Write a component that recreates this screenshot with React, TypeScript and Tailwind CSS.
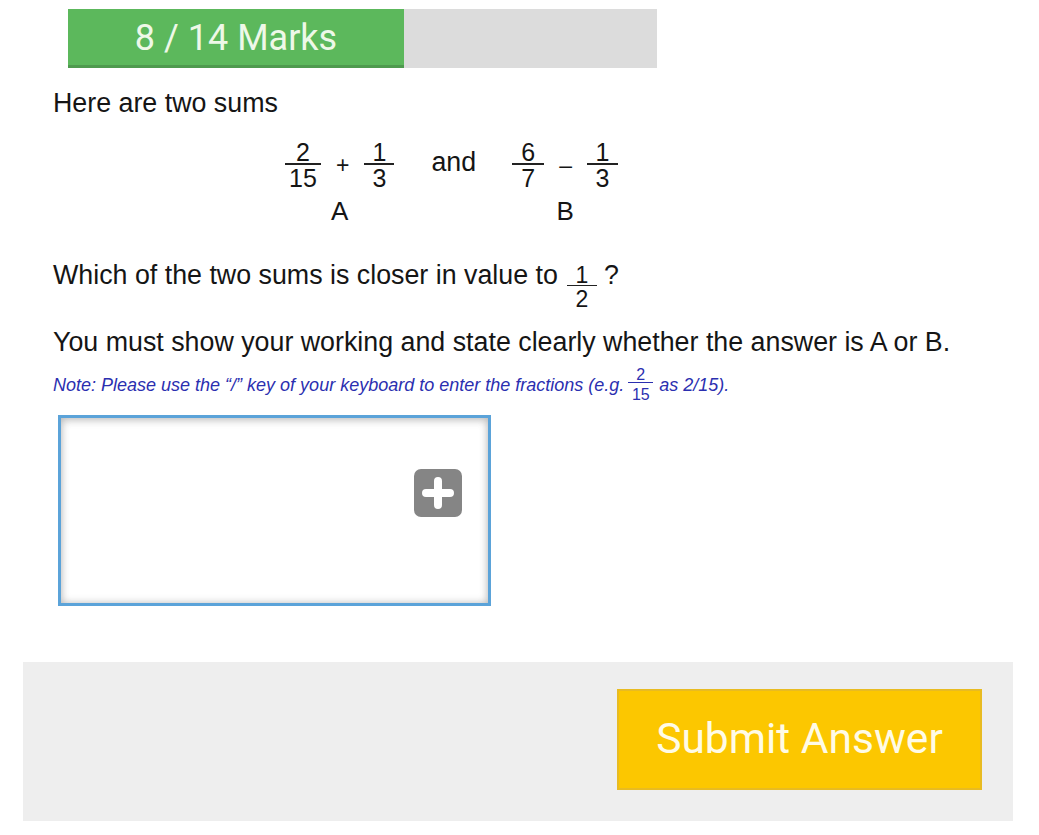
import type { ReactNode } from 'react';

// ── Stacked fraction ─────────────────────────────────────────────────────────

function Frac({
  top,
  bottom,
  className = '',
  lineClass = 'leading-[21px]',
  barClass = 'border-t-2 border-[#222]',
  gapClass = 'mt-[3px]',
}: {
  top: ReactNode;
  bottom: ReactNode;
  className?: string;
  lineClass?: string;
  barClass?: string;
  gapClass?: string;
}): JSX.Element {
  return (
    <span className={`inline-flex shrink-0 flex-col items-center ${className}`}>
      <span className={lineClass}>{top}</span>
      <span className={`w-full ${barClass}`} />
      <span className={`${lineClass} ${gapClass}`}>{bottom}</span>
    </span>
  );
}

// ── Progress bar ─────────────────────────────────────────────────────────────

function MarksBar({ marks, total }: { marks: number; total: number }): JSX.Element {
  return (
    <div className="ml-[68px] mt-[9px] flex h-[59px] w-[589px] bg-[#dcdcdc]">
      <div className="flex w-[336px] items-center justify-center border-b-[3px] border-[#4e9a4e] bg-[#5cb85c] pt-[1px] font-['Roboto'] text-[36px] leading-none text-[#eef8e8]">
        {marks} / {total} Marks
      </div>
    </div>
  );
}

// ── Sum display ──────────────────────────────────────────────────────────────

function Sum({ label, children }: { label: string; children: ReactNode }): JSX.Element {
  return (
    <div className="flex flex-col items-center">
      <div className="flex items-center gap-[15px]">{children}</div>
      <div className="mt-[9px] text-[26px] leading-none">{label}</div>
    </div>
  );
}

export default function App(): JSX.Element {
  return (
    <div className="relative h-[835px] w-[1039px] overflow-hidden bg-white font-['Liberation_Sans',Arial,sans-serif] text-[#151515]">
      <MarksBar marks={8} total={14} />

      <div className="pl-[53px]">
        <p className="mt-[20px] text-[26.8px] leading-[30px]">Here are two sums</p>

        <div className="ml-[232px] mt-[24px] flex items-start text-[25px]">
          <Sum label="A">
            <Frac top="2" bottom="15" className="w-[36px]" />
            <span className="text-[23px] leading-none">+</span>
            <Frac top="1" bottom="3" className="w-[30px]" />
          </Sum>
          <span className="ml-[37px] mr-[36px] mt-[7px] text-[26.8px] leading-none">and</span>
          <Sum label="B">
            <Frac top="6" bottom="7" className="w-[32px]" />
            <span className="text-[23px] leading-none">–</span>
            <Frac top="1" bottom="3" className="w-[31px]" />
          </Sum>
        </div>

        <div className="mt-[36px] flex h-[30px] items-start text-[26.8px] leading-[30px]">
          <span>Which of the two sums is closer in value to</span>
          <Frac
            top="1"
            bottom="2"
            className="ml-[9px] mt-[6px] w-[30px] text-[23px]"
            lineClass="leading-[19px]"
            barClass="border-t-[1.5px] border-[#222]"
            gapClass="mt-[4px]"
          />
          <span className="ml-[7px]">?</span>
        </div>

        <p className="mt-[37px] text-[26.8px] leading-[30px]">
          You must show your working and state clearly whether the answer is A or B.
        </p>

        <div className="mt-[17px] flex h-[22px] items-start text-[18px] italic leading-[22px] text-[#2b2fb0]">
          <span>Note: Please use the “/” key of your keyboard to enter the fractions (e.g.</span>
          <Frac
            top="2"
            bottom="15"
            className="ml-[4px] mt-[-7px] w-[25px] text-[16px] not-italic"
            lineClass="leading-[15px]"
            barClass="border-t-[1.5px] border-[#2b2fb0]"
            gapClass="mt-[4px]"
          />
          <span className="ml-[6px]">as 2/15).</span>
        </div>

        <div className="relative ml-[5px] mt-[19px] h-[191px] w-[433px] border-[3px] border-[#5ba3d9] bg-white shadow-[inset_0_0_9px_rgba(0,0,0,0.22),inset_0_3px_8px_rgba(0,0,0,0.12)]">
          <button
            type="button"
            className="absolute right-[26px] top-[51px] flex h-[48px] w-[48px] items-center justify-center rounded-[7px] bg-[#858585]"
          >
            <svg width="34" height="34" viewBox="0 0 34 34">
              <path d="M17 5 V29 M5 17 H29" stroke="white" strokeWidth="8" strokeLinecap="round" />
            </svg>
          </button>
        </div>
      </div>

      <div className="ml-[23px] mt-[56px] flex h-[159px] w-[990px] items-start justify-end bg-[#eeeeee] pr-[31px] pt-[27px]">
        <button
          type="button"
          className="h-[101px] w-[365px] border-2 border-[#e8bb22] bg-[#fcc700] font-['Roboto'] text-[42.5px] leading-none text-[#fffbe6]"
        >
          Submit Answer
        </button>
      </div>
    </div>
  );
}
